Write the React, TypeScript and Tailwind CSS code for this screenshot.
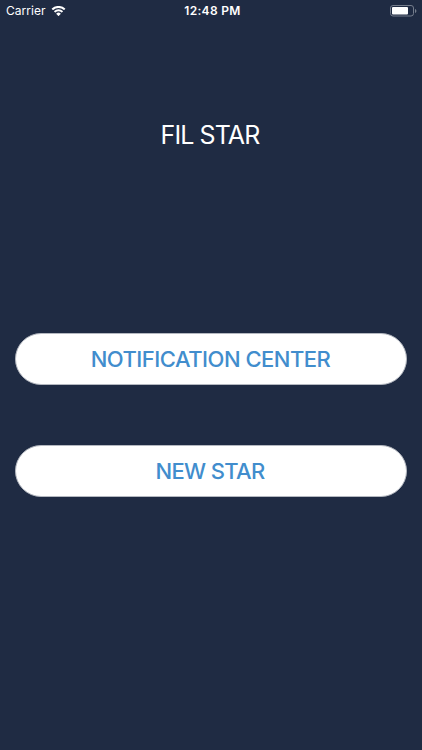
type ActionButtonProps = {
    label: string;
    textClass: string;
};

function WifiIcon() {
    return (
        <svg className="h-[11px] w-[15px]" viewBox="0 0 15 11" fill="white">
            <path d="M7.5 1.9c2 0 3.9.8 5.3 2.1.1.1.3.1.4 0l1-1a.3.3 0 0 0 0-.4 9.7 9.7 0 0 0-13.4 0 .3.3 0 0 0 0 .4l1 1c.1.1.3.1.4 0a7.7 7.7 0 0 1 5.3-2.1z" />
            <path d="M7.5 5.3c1.1 0 2.2.4 3 1.2.1.1.3.1.4 0l1-1.1a.3.3 0 0 0 0-.4 6.5 6.5 0 0 0-8.8 0 .3.3 0 0 0 0 .4l1 1.1c.1.1.3.1.4 0a4.4 4.4 0 0 1 3-1.2z" />
            <path d="M9.6 7.9a.3.3 0 0 0 0-.4 3.2 3.2 0 0 0-4.2 0 .3.3 0 0 0 0 .4l1.900 2.100c.1.1.3.1.4 0z" />
        </svg>
    );
}

function BatteryIcon() {
    return (
        <svg className="h-[12px] w-[27px]" viewBox="0 0 27 12" fill="none">
            <rect x="0.5" y="0.5" width="23" height="10.5" rx="2.5" stroke="#757d8c" />
            <rect x="2" y="2" width="16" height="7.5" rx="1" fill="white" />
            <path d="M25 4v4c.8-.3 1.4-1.1 1.4-2s-.6-1.7-1.4-2z" fill="#757d8c" />
        </svg>
    );
}

function StatusBar() {
    return (
        <div className="grid h-[22px] grid-cols-3 items-center pr-[5px] pl-[6px] text-[12px] leading-none">
            <div className="flex items-center gap-[5px]">
                <span className="tracking-[0.05px]">Carrier</span>
                <WifiIcon />
            </div>
            <span className="pl-[2px] text-center font-semibold tracking-[0.3px]">12:48 PM</span>
            <div className="flex justify-end">
                <BatteryIcon />
            </div>
        </div>
    );
}

function ActionButton({ label, textClass }: ActionButtonProps) {
    return (
        <button
            type="button"
            className="flex h-[52px] w-full items-center justify-center rounded-full border border-[#b4b8c0] bg-white text-[#418dcd]"
        >
            <span className={textClass}>{label}</span>
        </button>
    );
}

export default function App() {
    return (
        <main className="flex h-[750px] w-[422px] flex-col overflow-hidden bg-[#1f2b43] font-['Inter',sans-serif] text-white">
            <StatusBar />
            <h1 className="mt-[97px] pr-[2px] text-center text-[25px] leading-[32px] tracking-[-0.9px]">
                FIL STAR
            </h1>
            <div className="mt-[182px] flex flex-col gap-[60px] px-[15px]">
                <ActionButton
                    label="NOTIFICATION CENTER"
                    textClass="pr-px text-[22px] font-medium tracking-[-0.5px]"
                />
                <ActionButton
                    label="NEW STAR"
                    textClass="pr-[2px] text-[22px] font-medium tracking-[-0.65px]"
                />
            </div>
        </main>
    );
}
